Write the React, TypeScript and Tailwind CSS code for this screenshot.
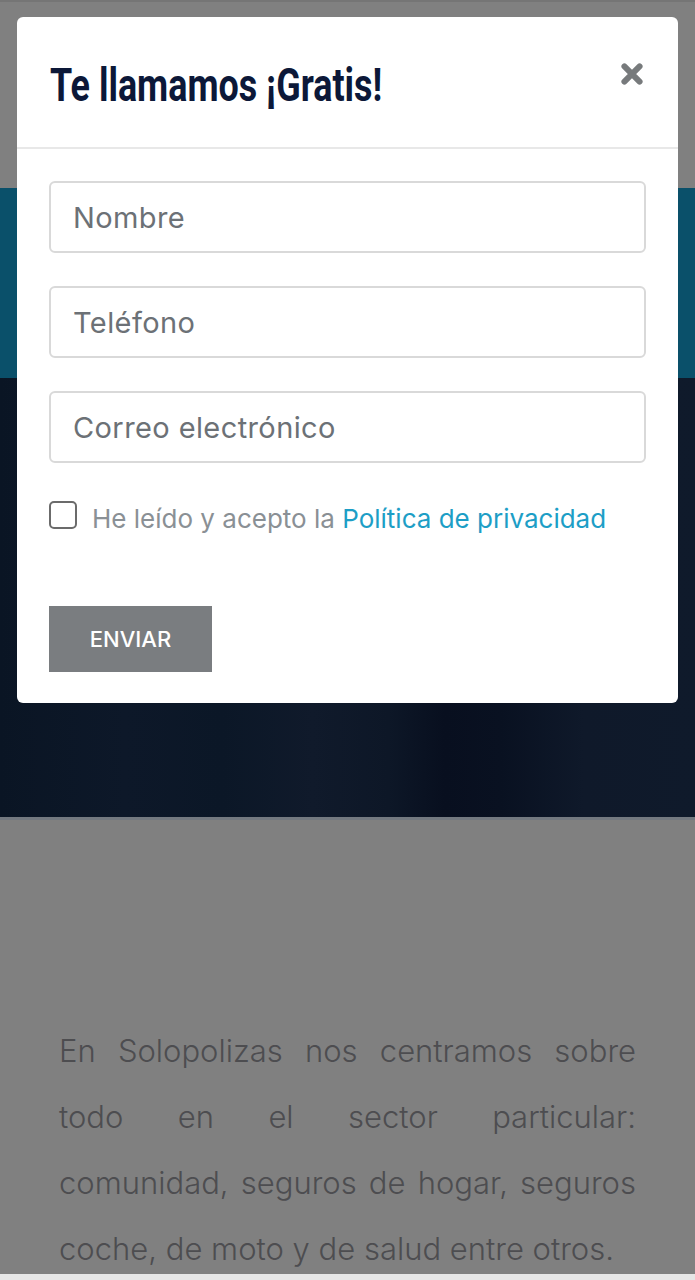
import React from "react";

const body = "'Inter', 'Noto Sans', sans-serif";

const lines = [
  "En Solopolizas nos centramos sobre",
  "todo en el sector particular:",
  "comunidad, seguros de hogar, seguros",
];

function CloseIcon() {
  return (
    <svg viewBox="0 0 24 24" className="w-[26px] h-[26px]" aria-hidden="true">
      <path d="M5 5 L19 19 M19 5 L5 19" stroke="#777a7c" strokeWidth="5.5" strokeLinecap="round" fill="none" />
    </svg>
  );
}

function Field({ placeholder }: { placeholder: string }) {
  return (
    <input
      type="text"
      placeholder={placeholder}
      className="h-[72px] w-full rounded-md border-2 border-[#d9d9d9] bg-white px-[22px] text-[29px] tracking-[0.4px] text-[#6c7176] outline-none placeholder:text-[#6c7176]"
      style={{ fontFamily: body }}
    />
  );
}

export default function App() {
  return (
    <div className="relative h-[1280px] w-[695px] overflow-hidden bg-[#808080]">
      {/* Page behind the overlay */}
      <div className="h-[2px] bg-[#757575]" />
      <div className="h-[186px]" />
      <div className="h-[190px] bg-[#0a506a]" />
      <div className="h-[439px] bg-[linear-gradient(90deg,#0a1524_0%,#0d1829_18%,#0b1727_32%,#101a2b_45%,#0d1727_56%,#080f1f_64%,#091121_72%,#0f192a_84%,#0f1a2b_100%)]" />
      <div className="h-[3px] bg-[#737980]" />
      <div className="px-[59px] pt-[198px]">
        <div className="text-[31px] font-light leading-[66px] text-[#4d4d50]" style={{ fontFamily: body }}>
          {lines.map((l) => (
            <p key={l} className="text-justify [text-align-last:justify]">
              {l}
            </p>
          ))}
          <p>coche, de moto y de salud entre otros.</p>
        </div>
      </div>
      <div className="absolute bottom-0 left-0 h-[6px] w-full bg-[#e6e6e6]" />

      {/* Modal */}
      <div className="absolute left-[17px] top-[17px] w-[661px] rounded-md bg-white">
        <div className="flex h-[132px] items-start justify-between border-b-2 border-[#e8e8e8] px-[33px] pt-[42px]">
          <h2
            className="origin-left scale-x-[0.78] whitespace-nowrap text-[46px] font-bold leading-[52px] text-[#0c1838]"
            style={{ fontFamily: "'Roboto', 'Liberation Sans', sans-serif" }}
          >
            Te llamamos ¡Gratis!
          </h2>
          <button className="mt-[2px]">
            <CloseIcon />
          </button>
        </div>
        <div className="flex flex-col px-[32px] pb-[31px] pt-[32px]">
          <div className="flex flex-col gap-[33px]">
            <Field placeholder="Nombre" />
            <Field placeholder="Teléfono" />
            <Field placeholder="Correo electrónico" />
          </div>
          <label className="mt-[38px] flex items-start gap-[15px]" style={{ fontFamily: body }}>
            <span className="block h-[28px] w-[28px] shrink-0 rounded-[5px] border-2 border-[#6b6b6b]" />
            <span className="mt-[1px] whitespace-nowrap text-[26px] leading-[34px] text-[#8a9095]">
              He leído y acepto la <span className="text-[#1d9ec6]">Política de privacidad</span>
            </span>
          </label>
          <button
            className="mt-[70px] h-[66px] w-[163px] bg-[#7a7d80] text-[22px] font-medium uppercase text-white"
            style={{ fontFamily: body }}
          >
            Enviar
          </button>
        </div>
      </div>
    </div>
  );
}
